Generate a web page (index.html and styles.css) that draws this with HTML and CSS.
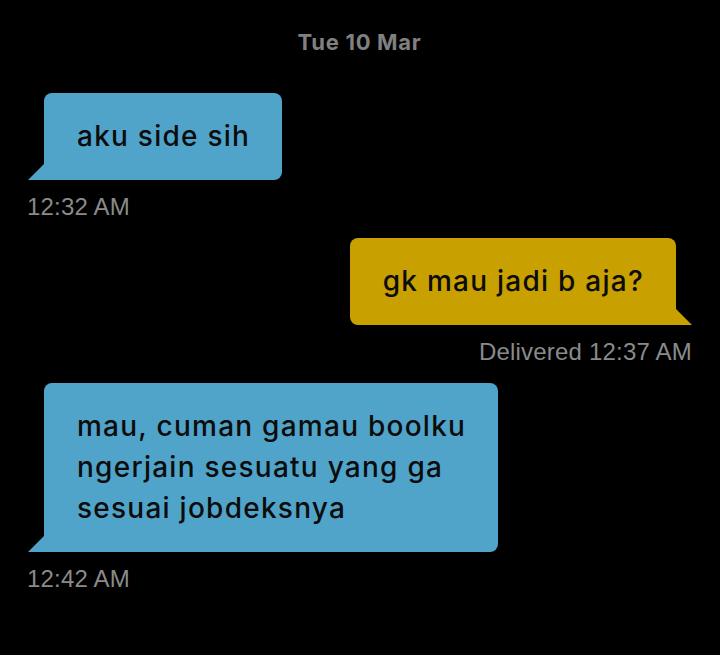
FILE: index.html
```html
<!DOCTYPE html>
<html>
<head>
<meta charset="utf-8">
<link rel="stylesheet" href="styles.css">
</head>
<body>
<div class="chat">
  <div class="date">Tue 10 Mar</div>
  <div class="msg in">
    <div class="bubble">aku side sih</div>
    <div class="meta">12:32 AM</div>
  </div>
  <div class="msg out">
    <div class="bubble">gk mau jadi b aja?</div>
    <div class="meta">Delivered 12:37 AM</div>
  </div>
  <div class="msg in">
    <div class="bubble">mau, cuman gamau boolku<br>ngerjain sesuatu yang ga<br>sesuai jobdeksnya</div>
    <div class="meta">12:42 AM</div>
  </div>
</div>
</body>
</html>
```
FILE: styles.css
```css
html, body {
  margin: 0;
  background: #000;
}
.chat {
  width: 720px;
  height: 655px;
  box-sizing: border-box;
  padding: 30px 28px 0 27px;
  display: flex;
  flex-direction: column;
  font-family: "Inter", "Open Sans", sans-serif;
}
.date {
  text-align: center;
  color: #808080;
  font-weight: 700;
  font-size: 22px;
  letter-spacing: 0.7px;
  line-height: 24px;
  margin-bottom: 39px;
}
.msg {
  display: flex;
  flex-direction: column;
  margin-bottom: 19px;
}
.msg.in { align-items: flex-start; }
.msg.out { align-items: flex-end; }
.bubble {
  position: relative;
  color: #0c0c0c;
  font-size: 28px;
  font-weight: 500;
  letter-spacing: 1.25px;
  line-height: 41px;
  padding: 23px 32px 23px 33px;
  border-radius: 8px;
}
.msg.in .bubble {
  background: #50a4ca;
  margin-left: 17px;
  border-bottom-left-radius: 0;
}
.msg.out .bubble {
  background: #c8a000;
  margin-right: 16px;
  border-bottom-right-radius: 0;
}
.bubble::after {
  content: "";
  position: absolute;
  bottom: 0;
  width: 16px;
  height: 16px;
}
.msg.in .bubble::after {
  left: -16px;
  background: #50a4ca;
  clip-path: polygon(0 100%, 100% 0, 100% 100%);
}
.msg.out .bubble::after {
  right: -16px;
  background: #c8a000;
  clip-path: polygon(0 0, 100% 100%, 0 100%);
}
.meta {
  margin-top: 15px;
  color: #8a8a8a;
  font-size: 24px;
  letter-spacing: 0.2px;
  line-height: 24px;
  font-family: "Liberation Sans", "Open Sans", sans-serif;
}
```
